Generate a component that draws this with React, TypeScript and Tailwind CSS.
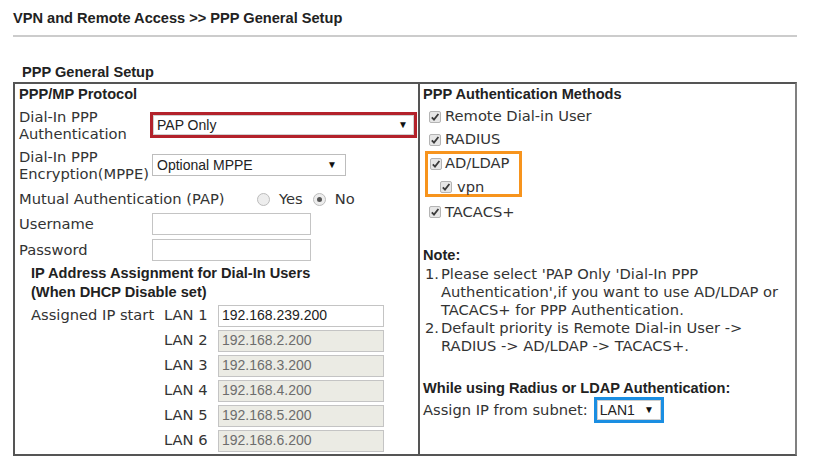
import React from "react";

// ─── Fonts ────────────────────────────────────────────────────────────────────

const VERD = "font-['DejaVu_Sans',Verdana,sans-serif] text-[14.7px] text-[#333] whitespace-nowrap";
const ARIAL = "font-['Liberation_Sans',Arial,sans-serif]";
const HEAD = `${ARIAL} font-bold text-[14.6px] text-[#222] whitespace-nowrap`;

// ─── Small controls ───────────────────────────────────────────────────────────

function Check({ className = "" }: { className?: string }) {
  return (
    <span
      className={`inline-flex shrink-0 w-[12px] h-[12px] items-center justify-center rounded-[2px] border border-[#b4b4b4] bg-[#e6e6e6] ${className}`}
    >
      <svg viewBox="0 0 10 10" className="w-[10px] h-[10px]">
        <path d="M1.8 5.3 L4 7.6 L8.4 2" fill="none" stroke="#3a3a3a" strokeWidth="1.8" />
      </svg>
    </span>
  );
}

function Radio({ checked }: { checked?: boolean }) {
  return (
    <span className="inline-flex shrink-0 w-[13px] h-[13px] items-center justify-center rounded-full border border-[#bcbcbc] bg-[#ededed]">
      {checked && <span className="w-[5px] h-[5px] rounded-full bg-[#555]" />}
    </span>
  );
}

function Arrow() {
  return <span className="text-[10px] leading-none text-[#111]">▼</span>;
}

const LANS = [
  { lan: "LAN 1", ip: "192.168.239.200", on: true },
  { lan: "LAN 2", ip: "192.168.2.200" },
  { lan: "LAN 3", ip: "192.168.3.200" },
  { lan: "LAN 4", ip: "192.168.4.200" },
  { lan: "LAN 5", ip: "192.168.5.200" },
  { lan: "LAN 6", ip: "192.168.6.200" },
];

// ─── Page ─────────────────────────────────────────────────────────────────────

export default function App() {
  return (
    <div className="w-[814px] h-[476px] bg-white overflow-hidden px-[13px]">
      <div className="w-[784px]">
        {/* Breadcrumb */}
        <p className={`${HEAD} pt-[9px] leading-[18px]`}>VPN and Remote Access &gt;&gt; PPP General Setup</p>
        <div className="mt-[8px] h-[2px] bg-[#cccccc]" />

        <p className={`${HEAD} mt-[26px] pl-[9px] leading-[18px]`}>PPP General Setup</p>

        {/* Table */}
        <div className="mt-[1px] flex h-[374px] border-2 border-[#555] border-r-[#808080]">
          {/* Left column */}
          <div className="w-[405px] shrink-0 border-r-2 border-[#555] pl-[4px] flex flex-col">
            <div className={`${HEAD} h-[22px] flex items-center`}>PPP/MP Protocol</div>

            <div className="h-[38px] flex items-center">
              <div className={`${VERD} w-[131px] leading-[17px]`}>
                Dial-In PPP
                <br />
                Authentication
              </div>
              <div className="w-[267px] h-[26px] border-[3px] border-[#b3222b] flex">
                <div className={`flex-1 flex items-center justify-between border border-[#d0d0d0] bg-white pl-[3px] pr-[5px] ${ARIAL} text-[14px] text-[#222]`}>
                  <span>PAP Only</span>
                  <Arrow />
                </div>
              </div>
            </div>

            <div className="h-[42px] flex items-center">
              <div className={`${VERD} w-[133px] leading-[17px]`}>
                Dial-In PPP
                <br />
                Encryption(MPPE)
              </div>
              <div className={`w-[194px] h-[22px] flex items-center justify-between border border-[#bdbdbd] bg-white pl-[4px] pr-[8px] ${ARIAL} text-[14px] text-[#222]`}>
                <span>Optional MPPE</span>
                <Arrow />
              </div>
            </div>

            <div className={`${VERD} h-[26px] flex items-center`}>
              <span className="w-[238px] shrink-0">Mutual Authentication (PAP)</span>
              <Radio />
              <span className="ml-[9px]">Yes</span>
              <span className="ml-[10px] flex"><Radio checked /></span>
              <span className="ml-[9px]">No</span>
            </div>

            <div className="h-[24px] flex items-center">
              <span className={`${VERD} w-[133px]`}>Username</span>
              <div className="w-[159px] h-[22px] border border-[#c4c4c4] bg-white" />
            </div>

            <div className="h-[28px] flex items-center">
              <span className={`${VERD} w-[133px]`}>Password</span>
              <div className="w-[159px] h-[22px] border border-[#c4c4c4] bg-white" />
            </div>

            <div className={`${HEAD} h-[38px] pl-[12px] leading-[19px] flex flex-col justify-center`}>
              <span>IP Address Assignment for Dial-In Users</span>
              <span>(When DHCP Disable set)</span>
            </div>

            <div className="mt-[1px] pl-[12px] flex flex-col">
              {LANS.map((r, i) => (
                <div key={r.lan} className="h-[25px] flex items-center">
                  <span className={`${VERD} w-[133px]`}>{i === 0 ? "Assigned IP start" : ""}</span>
                  <span className={`${VERD} w-[54px]`}>{r.lan}</span>
                  <div
                    className={
                      r.on
                        ? `w-[166px] h-[22px] flex items-center border border-[#c4c4c4] bg-white pl-[3px] ${ARIAL} text-[14px] text-[#222]`
                        : `w-[166px] h-[22px] flex items-center border border-[#c4c4c4] bg-[#ebebe4] pl-[3px] ${ARIAL} text-[14px] text-[#6d6d6d]`
                    }
                  >
                    {r.ip}
                  </div>
                </div>
              ))}
            </div>
          </div>

          {/* Right column */}
          <div className="flex-1 pl-[3px] flex flex-col">
            <div className={`${HEAD} h-[21px] flex items-center`}>PPP Authentication Methods</div>

            <div className={`${VERD} h-[23px] flex items-center pl-[6px] gap-[4px]`}>
              <Check />
              <span>Remote Dial-in User</span>
            </div>
            <div className={`${VERD} h-[23px] flex items-center pl-[6px] gap-[4px]`}>
              <Check />
              <span>RADIUS</span>
            </div>

            <div className="ml-[2px] w-[97px] h-[46px] border-[3px] border-[#f7941d] flex flex-col">
              <div className={`${VERD} h-[19px] flex items-center pl-[2px] gap-[3px]`}>
                <Check />
                <span>AD/LDAP</span>
              </div>
              <div className={`${VERD} mt-[3px] h-[22px] flex items-center pl-[12px] gap-[5px]`}>
                <Check />
                <span>vpn</span>
              </div>
            </div>

            <div className={`${VERD} mt-[3px] h-[24px] flex items-center pl-[6px] gap-[4px]`}>
              <Check />
              <span>TACACS+</span>
            </div>

            <div className={`${HEAD} mt-[21px] leading-[20px]`}>Note:</div>
            <div className={`${VERD} leading-[18px] pl-[2px]`}>
              <div className="flex">
                <span className="w-[16px] shrink-0">1.</span>
                <span>
                  Please select 'PAP Only 'Dial-In PPP
                  <br />
                  Authentication',if you want to use AD/LDAP or
                  <br />
                  TACACS+ for PPP Authentication.
                </span>
              </div>
              <div className="flex">
                <span className="w-[16px] shrink-0">2.</span>
                <span>
                  Default priority is Remote Dial-in User -&gt;
                  <br />
                  RADIUS -&gt; AD/LDAP -&gt; TACACS+.
                </span>
              </div>
            </div>

            <div className={`${HEAD} mt-[24px] leading-[18px]`}>While using Radius or LDAP Authentication:</div>
            <div className="h-[26px] flex items-center">
              <span className={VERD}>Assign IP from subnet:</span>
              <div className="ml-[6px] w-[70px] h-[26px] border-[3px] border-[#1a8ee2] flex">
                <div className={`flex-1 flex items-center justify-between border border-[#cfcfcf] bg-white pl-[2px] pr-[6px] ${ARIAL} text-[14px] text-[#222]`}>
                  <span>LAN1</span>
                  <Arrow />
                </div>
              </div>
            </div>
          </div>
        </div>
      </div>
    </div>
  );
}
